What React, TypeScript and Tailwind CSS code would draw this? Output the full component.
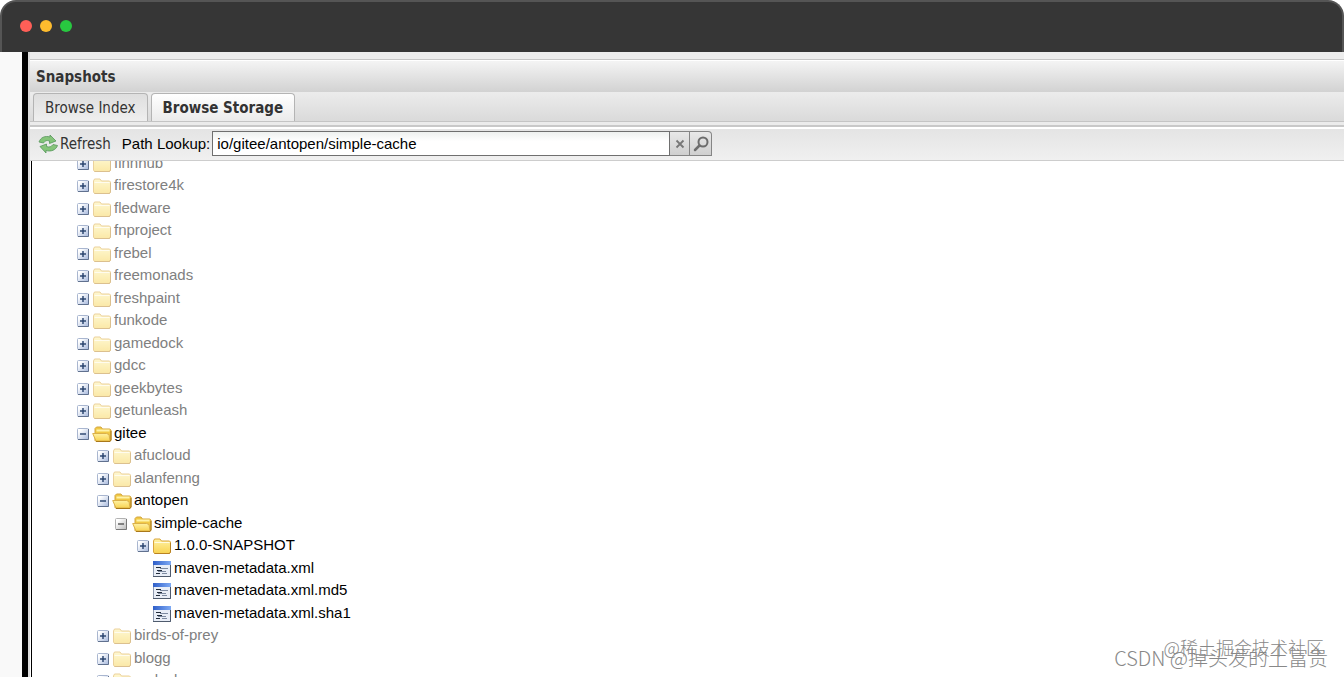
import React, { useState } from 'react';

type IconKind = 'folder' | 'open' | 'file';

interface TreeNode {
  name: string;
  level: number;
  icon: IconKind;
  dimmed?: boolean;
  grayToggle?: boolean;
}

const closed = (name: string, level: number): TreeNode => ({ name, level, icon: 'folder', dimmed: true });

const nodes: TreeNode[] = [
  closed('finnhub', 0),
  closed('firestore4k', 0),
  closed('fledware', 0),
  closed('fnproject', 0),
  closed('frebel', 0),
  closed('freemonads', 0),
  closed('freshpaint', 0),
  closed('funkode', 0),
  closed('gamedock', 0),
  closed('gdcc', 0),
  closed('geekbytes', 0),
  closed('getunleash', 0),
  { name: 'gitee', level: 0, icon: 'open' },
  closed('afucloud', 1),
  closed('alanfenng', 1),
  { name: 'antopen', level: 1, icon: 'open' },
  { name: 'simple-cache', level: 2, icon: 'open', grayToggle: true },
  { name: '1.0.0-SNAPSHOT', level: 3, icon: 'folder' },
  { name: 'maven-metadata.xml', level: 3, icon: 'file' },
  { name: 'maven-metadata.xml.md5', level: 3, icon: 'file' },
  { name: 'maven-metadata.xml.sha1', level: 3, icon: 'file' },
  closed('birds-of-prey', 1),
  closed('blogg', 1),
  closed('codeck', 1),
];

const indents = ['pl-[45px]', 'pl-[65px]', 'pl-[85px]', 'pl-[105px]'];

const Gradients = () => (
  <svg className="absolute h-0 w-0" aria-hidden="true">
    <defs>
      <linearGradient id="toggle" x1="0" y1="0" x2="1" y2="1">
        <stop offset="0.2" stopColor="#fff" />
        <stop offset="1" stopColor="#a6b8dc" />
      </linearGradient>
      <linearGradient id="toggleGray" x1="0" y1="0" x2="1" y2="1">
        <stop offset="0.2" stopColor="#fff" />
        <stop offset="1" stopColor="#b8b8b8" />
      </linearGradient>
      <linearGradient id="folder" x1="0" y1="0" x2="0" y2="1">
        <stop offset="0" stopColor="#fff2a4" />
        <stop offset="1" stopColor="#f8d351" />
      </linearGradient>
      <linearGradient id="fileBar" x1="0" y1="0" x2="1" y2="0">
        <stop offset="0" stopColor="#2f5fc9" />
        <stop offset="1" stopColor="#7eaaf4" />
      </linearGradient>
      <linearGradient id="arrow" x1="0" y1="0" x2="0" y2="1">
        <stop offset="0" stopColor="#8cc47e" />
        <stop offset="1" stopColor="#7cc474" />
      </linearGradient>
    </defs>
  </svg>
);

const Toggle: React.FC<{ expanded: boolean; gray?: boolean }> = ({ expanded, gray }) => (
  <svg viewBox="0 0 12 12" className="h-3 w-3">
    <rect x="0.5" y="0.5" width="11" height="11" rx="1" fill={gray ? 'url(#toggleGray)' : 'url(#toggle)'} stroke={gray ? '#b2b2b2' : '#a9b6d0'} />
    <path d="M1 11.5h10.5V1" fill="none" stroke={gray ? '#777' : '#60718f'} />
    <path d="M3 6h6" stroke={gray ? '#555' : '#243f6b'} strokeWidth="1.4" />
    {!expanded && <path d="M6 3v6" stroke="#243f6b" strokeWidth="1.4" />}
  </svg>
);

const FolderIcon = () => (
  <svg viewBox="0 0 20 18" className="h-[18px] w-5">
    <path d="M1.500 15V4L2.500 2H8l1.500 2h8l1 1v10l-1 1.500h-15z" fill="url(#folder)" stroke="#d9a53b" />
    <path d="M2.500 5.500h15" stroke="#fffbe0" />
    <path d="M2.500 16.500h15l1-1.500V6" fill="none" stroke="#b98222" />
  </svg>
);

const OpenFolderIcon = () => (
  <svg viewBox="0 0 20 18" className="h-[18px] w-5">
    <path d="M3 15.500V3.500L4.500 2H9l1.500 2h7L19 5v10l-1 1.500H4z" fill="#f1c945" stroke="#d3a640" />
    <path d="M4.500 5.500h13" stroke="#fff3a8" strokeWidth="2" />
    <path d="M.7 8.500h13.800l2.500 1 1 6.500H4z" fill="url(#folder)" stroke="#dbb04a" />
    <path d="M4 16.500h14l1-1.500V6" fill="none" stroke="#a9781a" />
  </svg>
);

const FileIcon = () => (
  <svg viewBox="0 0 18 16" className="h-4 w-[18px]">
    <rect x="0.5" y="0.5" width="17" height="15" fill="#e9eef7" stroke="#8f9bb0" />
    <rect width="18" height="4" fill="url(#fileBar)" />
    <path d="M0 15.500h17.500V4" fill="none" stroke="#4f5b6d" />
    <path d="M7 7.500h8M5 10.500h8M9 12.500h5" stroke="#7d8aa0" />
    <path d="M3 6.500h5M4 9.500h5M3 12.500h4" stroke="#222c3a" strokeWidth="1.200" />
  </svg>
);

const RefreshIcon = () => (
  <svg viewBox="0 0 20 20" className="h-5 w-5">
    <g fill="url(#arrow)" stroke="#55965a" strokeWidth="0.8" strokeLinejoin="round">
      <path d="M1 8C2.500 3.500 7 1.500 12 3V1l6 6-6.500 2.500V7C9 6 7 6.500 5.500 9z" />
      <path d="M19.500 11.500C18 16 13 18 8 16.500v2.500L2 12.500 8.500 10v2.500c2.500 1 5 .5 6.500-2z" />
    </g>
  </svg>
);

const TreeRow: React.FC<{ node: TreeNode }> = ({ node }) => (
  <li className={`flex h-[23px] items-center even:h-[22px] ${indents[node.level]}`}>
    {node.icon === 'file' ? (
      <span className="w-3" />
    ) : (
      <button aria-label={`Toggle ${node.name}`} className={`mt-0.5 ${node.grayToggle ? '-ml-0.5 mr-0.5' : ''}`}>
        <Toggle expanded={node.icon === 'open'} gray={node.grayToggle} />
      </button>
    )}
    <span className={`mt-0.5 ml-0.5 flex w-[21px] mr-0.5 shrink-0 justify-center ${node.dimmed ? 'opacity-50' : ''}`}>
      {node.icon === 'folder' && <FolderIcon />}
      {node.icon === 'open' && <OpenFolderIcon />}
      {node.icon === 'file' && <FileIcon />}
    </span>
    <span className={`whitespace-nowrap ${node.dimmed ? 'text-[#808080]' : 'text-black'}`}>{node.name}</span>
  </li>
);

export default function App() {
  const [path, setPath] = useState('io/gitee/antopen/simple-cache');

  return (
    <div className="relative flex h-screen flex-col overflow-hidden bg-white font-['Liberation_Sans',Arial,sans-serif] text-[15px] leading-5">
      <Gradients />

      {/* Window bar */}
      <header className="flex h-[52px] shrink-0 items-center gap-2 rounded-t-2xl border-2 border-b-0 border-[#555] bg-[#363636] pb-0.5 pl-[18px]">
        <span className="h-3 w-3 rounded-full bg-[#ff5f57]" />
        <span className="h-3 w-3 rounded-full bg-[#febc2e]" />
        <span className="h-3 w-3 rounded-full bg-[#28c840]" />
      </header>

      <div className="flex min-h-0 flex-1">
        <div className="w-[22px] shrink-0 bg-[#f9f9f9]" />
        <div className="w-1.5 shrink-0 bg-black" />

        <main className="flex min-w-0 flex-1 flex-col border-l-2 border-[#dcdcdc]">
          <div className="h-2 shrink-0 border-b border-[#c6c6c6] bg-[#ededed]" />

          {/* Panel title */}
          <div className="flex h-8 shrink-0 items-center border-t border-white bg-linear-to-b from-[#f4f4f4] to-[#d2d2d2] pl-1.5">
            <h1 className="font-['DejaVu_Sans_Condensed',Tahoma,sans-serif] text-[15px] font-bold text-[#333]">Snapshots</h1>
          </div>

          {/* Tabs */}
          <div role="tablist" className="flex h-[30px] shrink-0 items-end gap-[3px] border-b border-[#c4c4c4] bg-linear-to-b from-[#ececec] to-[#dadada] pl-[3px] font-['DejaVu_Sans_Condensed',Tahoma,sans-serif] text-[#333]">
            <button role="tab" aria-selected="false" className="h-7 rounded-t border border-b-0 border-[#b4b4b4] bg-linear-to-b from-[#dedede] to-[#efefef] px-[11px]">
              Browse Index
            </button>
            <button role="tab" aria-selected="true" className="h-7 rounded-t border border-b-0 border-[#b4b4b4] bg-linear-to-b from-white to-[#ebebeb] px-[11px] font-bold">
              Browse Storage
            </button>
          </div>
          <div className="h-[5px] shrink-0 border-b-2 border-[#c8c8c8] bg-[#ebebeb]" />

          {/* Toolbar */}
          <div className="flex h-[34px] shrink-0 items-center border-t-2 border-b border-t-white border-b-[#cdcdcd] bg-linear-to-b from-[#e4e4e4] to-[#f0f0f0] pb-0.5 pl-2">
            <button className="flex items-center gap-0.5 font-['DejaVu_Sans_Condensed',Tahoma,sans-serif] text-[#333]">
              <RefreshIcon />
              Refresh
            </button>
            <label htmlFor="path" className="ml-[11px]">Path Lookup:</label>
            <input
              id="path"
              value={path}
              onChange={(e) => setPath(e.target.value)}
              className="ml-0.5 h-[25px] w-[458px] border border-[#6f6f6f] bg-linear-to-b from-[#eef1ef] to-white to-40% px-1 outline-none"
            />
            <button aria-label="Clear" className="flex h-[25px] w-5 items-center justify-center border-y border-r border-[#858585] bg-linear-to-b from-[#e8e8e8] to-[#cfcfcf]">
              <svg viewBox="0 0 10 10" className="h-2.5 w-2.5">
                <path d="M1.500 1.500l7 7M8.500 1.500l-7 7" stroke="#777" strokeWidth="1.800" />
              </svg>
            </button>
            <button aria-label="Search" className="flex h-[25px] w-[22px] items-center justify-center rounded-tr-sm border-y border-r border-[#858585] bg-linear-to-b from-[#e8e8e8] to-[#cfcfcf]">
              <svg viewBox="0 0 16 16" className="h-4 w-4" fill="none" stroke="#6c6c6c" strokeLinecap="round">
                <circle cx="10" cy="6" r="4.500" strokeWidth="2" />
                <path d="M6.500 9.500L2 14" strokeWidth="2.500" />
              </svg>
            </button>
          </div>

          {/* Repository tree */}
          <div className="ml-px min-h-0 flex-1 overflow-hidden border-l border-black">
            <ul className="-mt-[10px]">
              {nodes.map((node) => (
                <TreeRow key={node.name} node={node} />
              ))}
            </ul>
          </div>
        </main>
      </div>

      {/* Watermarks */}
      <p className="absolute right-5 bottom-[18px] font-['Noto_Sans_CJK_SC',sans-serif] text-lg leading-6 font-light text-[#888]">@稀土掘金技术社区</p>
      <p className="absolute right-4 bottom-[7px] font-['Noto_Sans_CJK_SC',sans-serif] text-xl leading-6 font-light text-[#888]">CSDN @掉头发的土富贵</p>
    </div>
  );
}
